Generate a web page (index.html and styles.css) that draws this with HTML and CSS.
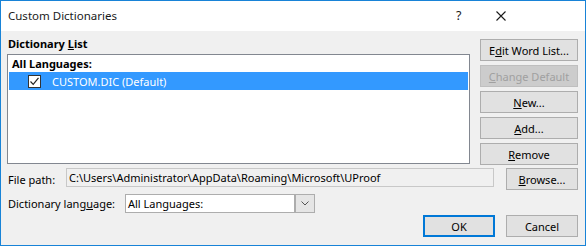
FILE: index.html
```html
<!DOCTYPE html>
<html lang="en">
<head>
  <meta charset="UTF-8" />
  <title>Custom Dictionaries</title>
  <link rel="stylesheet" href="styles.css">
</head>
<body>
  <div class="window">
    <div class="titlebar">
      <span class="title">Custom Dictionaries</span>
      <span class="help">?</span>
      <span class="close">
        <svg width="10" height="10" viewBox="0 0 10 10"><path d="M0.5 0.5 L9.5 9.5 M9.5 0.5 L0.5 9.5" stroke="#1a1a1a" stroke-width="1.1" fill="none"/></svg>
      </span>
    </div>

    <div class="content">
      <div class="top">
        <div class="list-col">
          <div class="label bold">Dictionary <u>L</u>ist</div>
          <div class="listbox">
            <div class="group bold">All Languages:</div>
            <div class="item selected">
              <span class="check">
                <svg width="11" height="11" viewBox="0 0 11 11"><path d="M1.5 5.5 L4.2 8.3 L9.5 1.8" stroke="#222" stroke-width="1.2" fill="none"/></svg>
              </span>
              <span>CUSTOM.DIC (Default)</span>
            </div>
          </div>
        </div>
        <div class="btn-col">
          <button class="btn">E<u>d</u>it Word List...</button>
          <button class="btn disabled"><u>C</u>hange Default</button>
          <button class="btn"><u>N</u>ew...</button>
          <button class="btn"><u>A</u>dd...</button>
          <button class="btn"><u>R</u>emove</button>
        </div>
      </div>

      <div class="row path-row">
        <span class="label">File path:</span>
        <div class="field">C:\Users\Administrator\AppData\Roaming\Microsoft\UProof</div>
        <button class="btn small"><u>B</u>rowse...</button>
      </div>

      <div class="row lang-row">
        <span class="label">Dictionary lang<u>u</u>age:</span>
        <div class="combo">
          <span class="combo-text">All Languages:</span>
          <span class="combo-btn">
            <svg width="8" height="5" viewBox="0 0 8 5"><path d="M0.5 0.5 L4 4 L7.5 0.5" stroke="#555" stroke-width="1" fill="none"/></svg>
          </span>
        </div>
      </div>

      <div class="footer">
        <button class="btn small default">OK</button>
        <button class="btn small">Cancel</button>
      </div>
    </div>
  </div>
</body>
</html>
```

FILE: styles.css
```css
html, body {
  margin: 0;
  padding: 0;
}
body {
  font-family: 'Noto Sans', sans-serif;
  font-size: 11px;
  color: #000;
  background: #fff;
}
.window {
  width: 586px;
  height: 246px;
  box-sizing: border-box;
  border: 1px solid #1883d7;
  display: flex;
  flex-direction: column;
  background: #f0f0f0;
}
.titlebar {
  height: 30px;
  background: #fff;
  display: flex;
  align-items: center;
  padding-left: 7px;
  flex-shrink: 0;
}
.title {
  flex: 1;
  color: #1a1a1a;
  font-size: 11.5px;
  margin-top: -1px;
}
.help {
  width: 6px;
  font-size: 12.5px;
  color: #1a1a1a;
  margin-right: 34px;
  margin-top: -1px;
}
.close {
  width: 10px;
  height: 10px;
  display: flex;
  margin-right: 79px;
}
.content {
  flex: 1;
  padding: 0 7px 0 6px;
}
.bold {
  font-weight: bold;
}
.top {
  display: flex;
  gap: 10px;
}
.list-col {
  flex: 1;
}
.list-col .label {
  height: 23px;
  line-height: 14px;
  padding-top: 6px;
  padding-left: 1px;
  box-sizing: border-box;
}
.listbox {
  height: 110px;
  box-sizing: border-box;
  border: 1px solid #828790;
  background: #fff;
  padding: 1px;
}
.group {
  height: 16px;
  line-height: 16px;
  padding-left: 3px;
}
.item {
  height: 18px;
  display: flex;
  align-items: center;
  padding-left: 19px;
  color: #fff;
}
.item.selected {
  background: #3399ff;
}
.check {
  width: 11px;
  height: 11px;
  border: 1px solid #333;
  background: #fff;
  margin-right: 11px;
  display: flex;
}
.btn-col {
  width: 98px;
  display: flex;
  flex-direction: column;
  gap: 4px;
  padding-top: 8px;
}
.btn {
  font-family: inherit;
  font-size: 11px;
  height: 22px;
  padding: 0;
  border: 1px solid #adadad;
  background: #e1e1e1;
  color: #000;
}
.btn.disabled {
  color: #a0a0a0;
  background: #cccccc;
  border-color: #bfbfbf;
}
.btn.small {
  width: 72px;
}
.btn.default {
  border: 2px solid #0078d7;
}
.row {
  display: flex;
  align-items: center;
}
.row .label {
  padding-left: 1px;
}
.path-row {
  margin-top: 3px;
  height: 22px;
}
.path-row .label {
  width: 58px;
}
.field {
  flex: 1;
  align-self: flex-start;
  height: 19px;
  line-height: 17px;
  box-sizing: border-box;
  border: 1px solid #c8c8c8;
  background: #f0f0f0;
  padding-left: 2px;
  margin-right: 12px;
  white-space: nowrap;
  overflow: hidden;
}
.lang-row {
  margin-top: 4px;
  height: 19px;
}
.lang-row .label {
  width: 117px;
}
.combo {
  width: 190px;
  height: 19px;
  box-sizing: border-box;
  border: 1px solid #adadad;
  background: #fff;
  display: flex;
}
.combo-text {
  flex: 1;
  line-height: 17px;
  padding-left: 2px;
}
.combo-btn {
  width: 20px;
  box-sizing: border-box;
  border-left: 2px solid #adadad;
  background: #e5e5e5;
  display: flex;
  align-items: center;
  justify-content: center;
}
.footer {
  display: flex;
  justify-content: flex-end;
  gap: 11px;
  margin-top: 2px;
}
```
